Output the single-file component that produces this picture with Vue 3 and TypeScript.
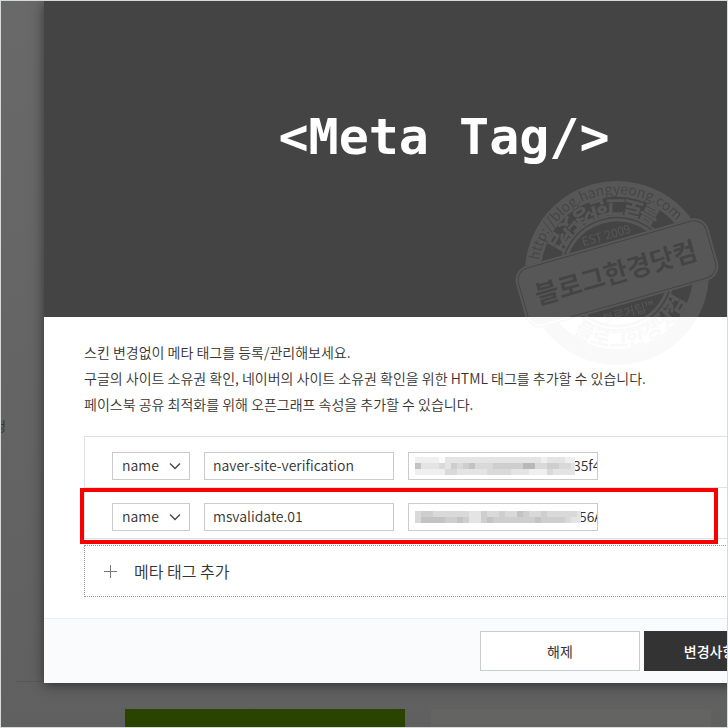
<script setup lang="ts">
import { ref } from 'vue'

interface MetaRow {
  id: number
  kind: string
  name: string
  content: string
  maskWidth: number
  mask: string[]
}

const CELL = 6

// Each digit is the darkness of one cell laid over the private part of a value.
const rows = ref<MetaRow[]>([
  {
    id: 1,
    kind: 'name',
    name: 'naver-site-verification',
    content: '35f4',
    maskWidth: 160,
    mask: [
      '111102222222222222222122211',
      '522232434533344444663344332',
      '111113322222333322211132222',
    ],
  },
  {
    id: 2,
    kind: 'name',
    name: 'msvalidate.01',
    content: '56A',
    maskWidth: 166,
    mask: [
      '3443333332243343354334333332',
      '3555544542245444444454444322',
    ],
  },
])

const shade = (digit: string): string => {
  const v = 250 - Number(digit) * 11
  return `rgb(${v}, ${v}, ${v})`
}

const addRow = (): void => {
  rows.value.push({ id: rows.value.length + 1, kind: 'name', name: '', content: '', maskWidth: 0, mask: [] })
}
</script>

<template>
  <div class="screen">
    <div class="backdrop">
      <span class="side-text">정</span>
      <span class="rule"></span>
      <span class="tile tile-green"></span>
      <span class="tile tile-grey"></span>
    </div>

    <section class="dialog" aria-label="Meta Tag">
      <header class="hero">
        <h1>&lt;Meta Tag/&gt;</h1>
      </header>

      <div class="body">
        <p>
          스킨 변경없이 메타 태그를 등록/관리해보세요.<br />
          구글의 사이트 소유권 확인, 네이버의 사이트 소유권 확인을 위한 HTML 태그를 추가할 수 있습니다.<br />
          페이스북 공유 최적화를 위해 오픈그래프 속성을 추가할 수 있습니다.
        </p>

        <ul class="list">
          <li v-for="row in rows" :key="row.id" class="row">
            <span class="select">
              <select v-model="row.kind" aria-label="name">
                <option value="name">name</option>
                <option value="property">property</option>
              </select>
              <svg class="chevron" viewBox="0 0 12 8" aria-hidden="true">
                <path d="M1 1.5 6 6.5 11 1.5" fill="none" stroke="#444" stroke-width="1.3" />
              </svg>
            </span>
            <input v-model="row.name" class="field" type="text" aria-label="name" />
            <span class="secret">
              <input
                v-model="row.content"
                class="field"
                type="text"
                aria-label="content"
                :style="{ paddingLeft: row.maskWidth + 4 + 'px' }"
              />
              <svg
                class="mask"
                :width="row.maskWidth"
                :height="row.mask.length * CELL"
                shape-rendering="crispEdges"
                aria-hidden="true"
              >
                <template v-for="(line, y) in row.mask" :key="y">
                  <rect
                    v-for="(digit, x) in line.split('')"
                    :key="x"
                    :x="x * CELL"
                    :y="y * CELL"
                    :width="CELL"
                    :height="CELL"
                    :fill="shade(digit)"
                  />
                </template>
              </svg>
            </span>
          </li>
          <li class="highlight" aria-hidden="true"></li>
        </ul>

        <button class="add" type="button" @click="addRow">
          <svg width="13" height="13" viewBox="0 0 13 13" aria-hidden="true">
            <path d="M6.5 0v13M0 6.5h13" stroke="#777" stroke-width="1" />
          </svg>
          메타 태그 추가
        </button>
      </div>

      <footer class="footer">
        <button class="btn" type="button">해제</button>
        <button class="btn btn-dark" type="button">변경사항 저장</button>
      </footer>
    </section>

    <svg class="stamp" viewBox="0 0 208 190" aria-hidden="true">
      <defs>
        <path id="arc-url" d="M25 95A79 79 0 0 1 183 95" />
        <path id="arc-top" d="M178 95A74 74 0 0 0 30 95" />
        <path id="arc-bottom" d="M30 95A74 74 0 0 0 178 95" />
        <mask id="around-band" maskUnits="userSpaceOnUse" x="-20" y="-20" width="250" height="240">
          <rect x="-20" y="-20" width="250" height="240" fill="#fff" />
          <rect x="4" y="63" width="200" height="64" rx="14" fill="#000" />
        </mask>
      </defs>
      <g transform="rotate(-16 104 95)">
        <g class="ink" mask="url(#around-band)">
          <circle cx="104" cy="95" r="84" fill="none" stroke-width="16" />
          <circle cx="104" cy="95" r="57" fill="none" stroke-width="2" />
          <circle cx="104" cy="95" r="53" fill="none" stroke-width="3" />
          <text class="ring-text"><textPath href="#arc-top" startOffset="50%" text-anchor="middle">블로그한경닷컴</textPath></text>
          <text class="ring-text"><textPath href="#arc-bottom" startOffset="50%" text-anchor="middle">블로그한경닷컴</textPath></text>
          <text class="small-text" x="104" y="60" text-anchor="middle">EST 2009</text>
          <text class="small-text" x="104" y="140" text-anchor="middle">블로거팁™</text>
        </g>
        <rect class="band-line" x="5" y="64" width="198" height="62" rx="14" />
        <rect class="band" x="7" y="66" width="194" height="58" rx="12" />
        <text class="url-text"><textPath href="#arc-url" startOffset="50%" text-anchor="middle">http://blog.hangyeong.com</textPath></text>
        <text class="band-text" x="103" y="104" text-anchor="middle">블로그한경닷컴</text>
      </g>
    </svg>
  </div>
</template>

<style>
body {
  background: #666;
}
</style>

<style scoped>
.screen {
  position: relative;
  box-sizing: border-box;
  min-height: 100vh;
  padding-left: 43px;
  overflow: hidden;
  border: 1px solid #d6dad9;
  background: linear-gradient(#696969, #606060);
  color: #333;
  font-family: 'Noto Sans CJK KR', 'Noto Sans', sans-serif;
  font-size: 14px;
  font-weight: 350;
}

.backdrop {
  position: absolute;
  inset: 0;
}

.side-text {
  position: absolute;
  top: 415px;
  left: -7px;
  color: #333;
  font-size: 13px;
  line-height: 20px;
}

.rule {
  position: absolute;
  top: 680px;
  left: 14px;
  width: 40px;
  border-top: 1px solid #565758;
}

.tile {
  position: absolute;
  bottom: 0;
  width: 280px;
  height: 18px;
}

.tile-green {
  left: 124px;
  background: #294400;
}

.tile-grey {
  left: 430px;
  background: #646462;
}

.dialog {
  position: relative;
  margin-right: -117px;
  background: #fff;
  box-shadow: 0 2px 12px rgba(0, 0, 0, 0.5);
}

.hero {
  display: flex;
  align-items: center;
  justify-content: center;
  height: 316px;
  background: #444;
}

h1 {
  margin: 0;
  padding-bottom: 44px;
  color: #fff;
  font-family: 'DejaVu Sans Mono', monospace;
  font-size: 50px;
  font-weight: 700;
  line-height: 60px;
}

.body {
  padding: 22px 40px 21px;
}

p {
  margin: 0 0 19px;
  line-height: 26px;
}

.list {
  position: relative;
  margin: 0 0 6px;
  padding: 0;
  border: 1px solid #e0e2e2;
  border-bottom: 0;
  list-style: none;
}

.row {
  display: flex;
  align-items: center;
  gap: 14px;
  box-sizing: border-box;
  height: 51px;
  padding: 8px 27px 0;
  border-bottom: 1px solid #dfe1e4;
}

.highlight {
  position: absolute;
  top: 51px;
  right: 85px;
  bottom: -5px;
  left: -5px;
  border: 4px solid #f80000;
  pointer-events: none;
}

.select {
  position: relative;
  display: flex;
}

select,
.field {
  box-sizing: border-box;
  height: 28px;
  margin: 0;
  border: 1px solid #c8ccce;
  border-radius: 0;
  background: #fff;
  color: #333;
  font-family: inherit;
  font-size: 14px;
  font-weight: inherit;
  line-height: 24px;
}

select {
  width: 78px;
  padding: 0 9px 2px;
  appearance: none;
}

.chevron {
  position: absolute;
  top: 10px;
  right: 9px;
  width: 12px;
  height: 8px;
  pointer-events: none;
}

.field {
  width: 190px;
  padding: 0 8px 2px;
}

.secret {
  position: relative;
  display: flex;
  align-items: center;
}

.secret .field {
  padding-right: 0;
}

.mask {
  position: absolute;
  left: 7px;
}

.add {
  display: flex;
  align-items: center;
  gap: 17px;
  box-sizing: border-box;
  width: 100%;
  height: 52px;
  padding: 0 19px;
  border: 1px dotted #999;
  background: #fff;
  color: #333;
  font-family: inherit;
  font-size: 16px;
  font-weight: inherit;
}

.footer {
  display: flex;
  justify-content: flex-end;
  gap: 4px;
  padding: 12px 40px;
  border-top: 1px solid #eceff0;
  background: #fafbfd;
}

.btn {
  box-sizing: border-box;
  width: 160px;
  height: 40px;
  border: 1px solid #c8ccce;
  background: #fff;
  color: #333;
  font-family: inherit;
  font-size: 14px;
}

.btn-dark {
  border-color: #333;
  background: #333;
  color: #fff;
  font-weight: 500;
}

.stamp {
  position: absolute;
  top: 177px;
  right: 6px;
  width: 208px;
  height: 190px;
  pointer-events: none;
  opacity: 0.13;
}

.ink {
  fill: #d9d9d9;
}

.ink circle,
.band-line {
  stroke: #d9d9d9;
}

.ring-text {
  font-size: 21px;
  font-weight: 900;
}

.small-text {
  font-size: 12px;
}

.band {
  fill: #d9d9d9;
}

.band-line {
  fill: none;
  stroke-width: 2px;
}

.url-text {
  fill: #444;
  font-size: 14px;
}

.band-text {
  fill: #444;
  font-size: 26px;
  font-weight: 700;
}
</style>
